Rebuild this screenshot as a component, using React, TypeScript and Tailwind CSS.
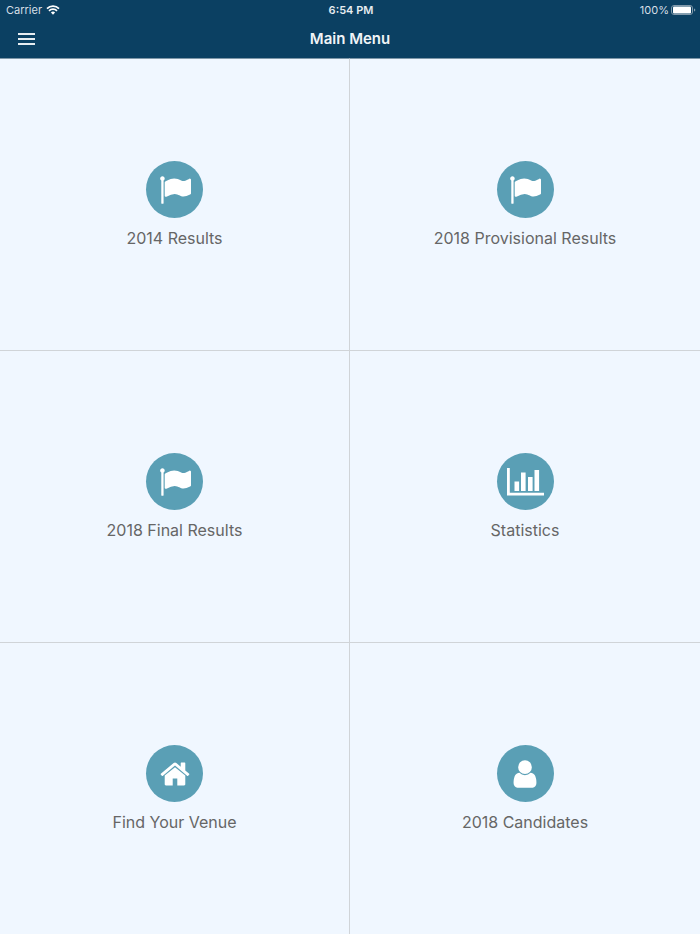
import type { ComponentType } from 'react'

type IconProps = { className?: string }

type MenuItem = {
  icon: ComponentType<IconProps>
  title: string
  size: string
}

const FlagIcon = ({ className }: IconProps) => (
  <svg viewBox="0 0 1792 1792" fill="currentColor" className={className} aria-hidden="true">
    <path d="M320 256q0 72-64 110v1266q0 13-9.500 22.500t-22.500 9.500h-64q-13 0-22.500-9.500t-9.500-22.500v-1266q-64-38-64-110 0-53 37.500-90.500t90.500-37.500 90.500 37.500 37.500 90.500zm1472 64v763q0 25-12.500 38.500t-39.500 27.500q-215 116-369 116-61 0-123.500-22t-108.500-48-115.500-48-142.500-22q-192 0-464 146-17 9-33 9-26 0-45-19t-19-45v-742q0-32 31-55 21-14 79-43 236-120 421-120 107 0 200 29t219 88q38 19 88 19 54 0 117.500-21t110-47 88-47 54.500-21q26 0 45 19t19 45z" />
  </svg>
)

const ChartIcon = ({ className }: IconProps) => (
  <svg viewBox="0 0 37 28" fill="currentColor" className={className} aria-hidden="true">
    <path d="M0 0h2.800v24.800H37v2.700H0z" />
    <path d="M7.500 13.500h4.600v9.500H7.500zM14 4.500h4.600V23H14zM21 9h4.600v14H21zM27.500 2h4.600v21h-4.600z" />
  </svg>
)

const HomeIcon = ({ className }: IconProps) => (
  <svg viewBox="0 0 1792 1792" fill="currentColor" className={className} aria-hidden="true">
    <path d="M1472 992v480q0 26-19 45t-45 19h-384v-384h-256v384h-384q-26 0-45-19t-19-45v-480q0-1 .5-3t.5-3l575-474 575 474q1 2 1 6zm223-69l-62 74q-8 9-21 11h-3q-13 0-21-7l-692-577-692 577q-12 8-24 7-13-2-21-11l-62-74q-8-10-7-23.500t11-21.500l719-599q32-26 76-26t76 26l244 204v-195q0-14 9-23t23-9h192q14 0 23 9t9 23v408l219 182q10 8 11 21.500t-7 23.500z" />
  </svg>
)

const UserIcon = ({ className }: IconProps) => (
  <svg viewBox="0 0 1792 1792" fill="currentColor" className={className} aria-hidden="true">
    <path d="M1536 1399q0 109-62.500 187t-150.500 78h-854q-88 0-150.500-78t-62.500-187q0-85 8.500-160.500t31.500-152 58.500-131 94-89 134.500-34.500q131 128 313 128t313-128q76 0 134.500 34.500t94 89 58.500 131 31.500 152 8.500 160.500zm-256-887q0 159-112.500 271.500t-271.500 112.500-271.500-112.500-112.500-271.500 112.500-271.500 271.500-112.500 271.500 112.500 112.500 271.500z" />
  </svg>
)

const items: MenuItem[] = [
  { icon: FlagIcon, title: '2014 Results', size: 'size-8' },
  { icon: FlagIcon, title: '2018 Provisional Results', size: 'size-8' },
  { icon: FlagIcon, title: '2018 Final Results', size: 'size-8' },
  { icon: ChartIcon, title: 'Statistics', size: 'h-7 w-[37px]' },
  { icon: HomeIcon, title: 'Find Your Venue', size: 'size-8' },
  { icon: UserIcon, title: '2018 Candidates', size: 'size-8' },
]

function StatusBar() {
  return (
    <div className="grid h-5 grid-cols-3 items-center pr-1 pl-1.5 text-[11px]">
      <div className="flex items-center gap-1">
        <span className="text-[#d5dfe6]">Carrier</span>
        <svg viewBox="0 0 14 10" fill="none" className="h-2.5 w-3.5" aria-hidden="true">
          <path d="M1 3.700a8.500 8.500 0 0 1 12 0M3 5.900a5.600 5.600 0 0 1 8 0" stroke="currentColor" strokeWidth="1.700" />
          <path d="M7 9.700 4.900 7.600a3 3 0 0 1 4.200 0z" fill="currentColor" />
        </svg>
      </div>
      <span className="text-center font-semibold text-[#e6edf1]">6:54 PM</span>
      <div className="flex items-center justify-end gap-0.5">
        <span className="text-[#d5dfe6]">100%</span>
        <svg viewBox="0 0 25 10" className="h-2.5 w-[25px]" aria-hidden="true">
          <rect x="0.500" y="0.500" width="21" height="9" rx="2.500" fill="none" stroke="#8199ab" />
          <rect x="2" y="1.500" width="18" height="7" rx="1" fill="currentColor" />
          <path d="M23 3.500v3q1.300-.4 1.300-1.500T23 3.500z" fill="#8199ab" />
        </svg>
      </div>
    </div>
  )
}

export default function App() {
  return (
    <div className="flex min-h-screen flex-col bg-[#f0f7ff] font-['Inter',sans-serif]">
      <header className="bg-[#0b4062] text-white">
        <StatusBar />
        <div className="grid h-[38px] grid-cols-[1fr_auto_1fr] items-center px-[18px]">
          <button type="button" aria-label="Open menu" className="flex w-[17px] cursor-pointer flex-col gap-[3px]">
            <span className="h-0.5 bg-[#e6edf1]" />
            <span className="h-0.5 bg-[#e6edf1]" />
            <span className="h-0.5 bg-[#e6edf1]" />
          </button>
          <h1 className="text-[15px] font-semibold text-[#f0f4f7]">Main Menu</h1>
        </div>
      </header>

      <main className="grid flex-1 auto-rows-fr grid-cols-2">
        {items.map((item) => (
          <button
            key={item.title}
            type="button"
            className="flex cursor-pointer flex-col items-center justify-center gap-2 border-t border-[#d0d4d8] pt-0.5 first:border-t-[#7e97a8] odd:border-r nth-2:border-t-[#7e97a8]"
          >
            <span className="flex size-[57px] items-center justify-center rounded-full bg-[#5a9fb5] text-white">
              <item.icon className={item.size} />
            </span>
            <span className="text-base text-[#666666]">{item.title}</span>
          </button>
        ))}
      </main>
    </div>
  )
}
